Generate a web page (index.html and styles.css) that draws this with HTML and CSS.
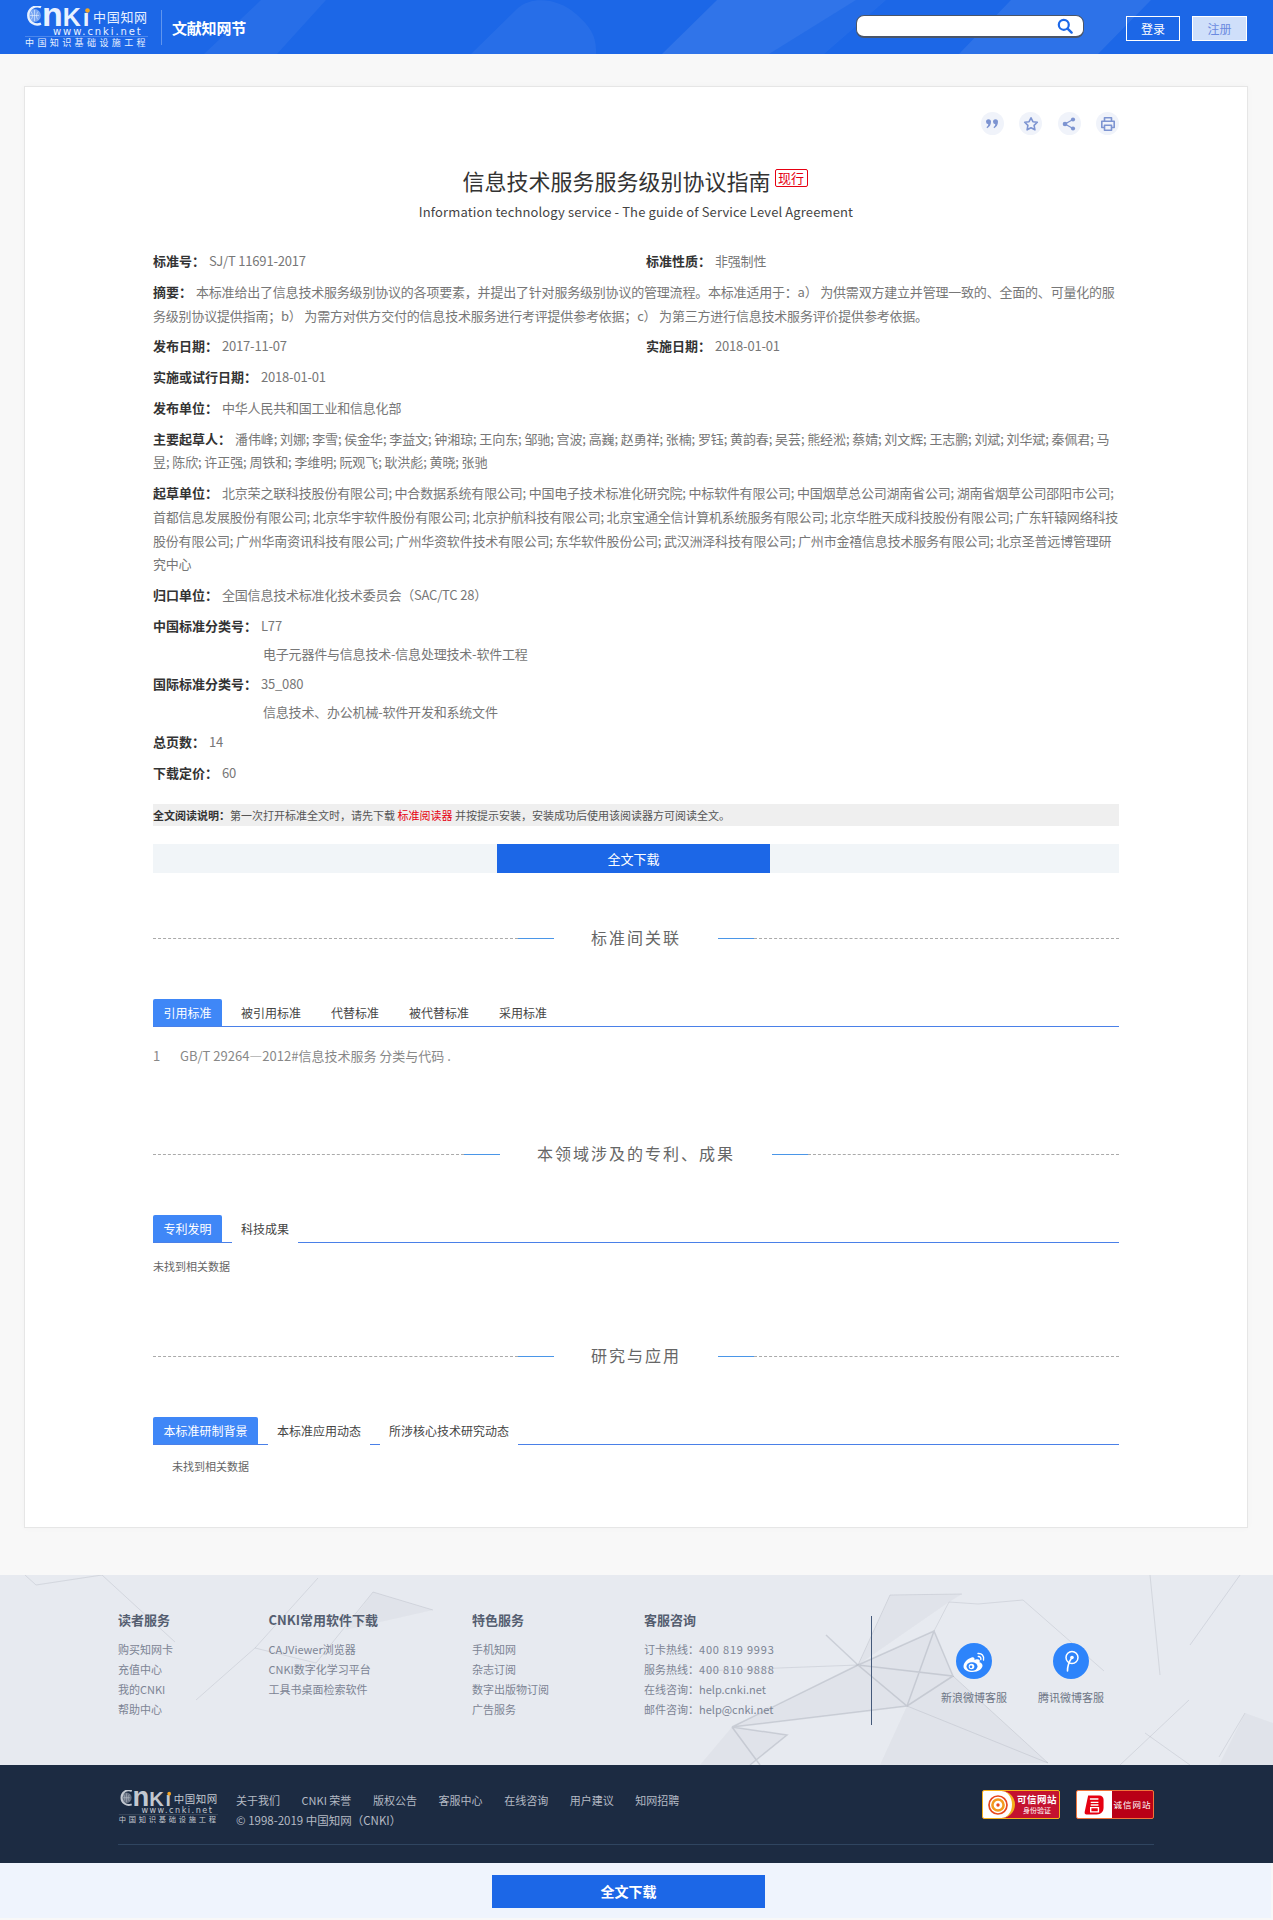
FILE: index.html
```html
<!DOCTYPE html>
<html lang="zh-CN">
<head>
<meta charset="utf-8">
<title>信息技术服务服务级别协议指南</title>
<link rel="stylesheet" href="styles.css">
</head>
<body>
<svg class="defs" width="0" height="0" aria-hidden="true">
  <symbol id="cnki-logo" viewBox="0 0 124 42">
    <path d="M17 1.200A9 9 0 1 0 17 17.600" fill="none" stroke="currentColor" stroke-width="2.400"/>
    <circle cx="10.500" cy="9.500" r="6.400" fill="currentColor" opacity=".45"/>
    <path d="M6 9.500h9M10.500 4v11M7 5.500c2 3 2 6 0 8M14 5.500c-2 3-2 6 0 8" fill="none" stroke="currentColor" stroke-width=".6"/>
    <text class="lg-nki" x="18" y="20">n<tspan class="lg-k">K</tspan><tspan class="lg-i" dx="2">ı</tspan></text>
    <circle cx="63.500" cy="4.500" r="2.300" fill="#f5a623"/>
    <text class="lg-cn" x="69" y="16">中国知网</text>
    <text class="lg-url" x="29" y="28.500">www.cnki.net</text>
    <path d="M1 30.500h123" stroke="currentColor" stroke-width=".4" opacity=".6"/>
    <text class="lg-sub" x="1" y="40">中国知识基础设施工程</text>
  </symbol>
</svg>

<header class="top">
  <svg class="top-bg" viewBox="0 0 1273 54" preserveAspectRatio="none" aria-hidden="true">
    <path d="M204 54 261 0h65l-49 54z" fill="#fff" opacity=".05"/>
    <path d="M471 54 518 8c14-12 40-10 58 6 14 12 20 22 20 36v4z" fill="#fff" opacity=".05"/>
    <path d="M662 54 717 0h139l-87 54z" fill="#fff" opacity=".09"/>
    <path d="M769 54 856 0h30l-62 54z" fill="#fff" opacity=".04"/>
    <path d="M959 54 1011 0h140l-53 54z" fill="#fff" opacity=".08"/>
  </svg>
  <a class="logo"><svg class="logo-svg"><use href="#cnki-logo"/></svg></a>
  <span class="top-sep"></span>
  <span class="top-title">文献知网节</span>
  <div class="search">
    <svg class="search-ic" viewBox="0 0 16 16"><circle cx="6.800" cy="6.800" r="5" fill="none" stroke="#1c68e8" stroke-width="2.200"/><path d="m10.600 10.600 4 4" stroke="#1c68e8" stroke-width="2.400" stroke-linecap="round"/></svg>
  </div>
  <a class="btn-login">登录</a>
  <a class="btn-reg">注册</a>
</header>

<main class="page">
  <article class="card">
    <div class="tools">
      <span class="tool"><svg viewBox="0 0 16 16"><path d="M2 5.800a2.500 2.500 0 1 1 5 0c0 3-1.500 5.200-3.800 6.400l-.7-1c1-.7 1.600-1.500 1.800-2.900A2.500 2.500 0 0 1 2 5.800zM9 5.800a2.500 2.500 0 1 1 5 0c0 3-1.500 5.200-3.800 6.400l-.7-1c1-.7 1.600-1.500 1.800-2.900A2.500 2.500 0 0 1 9 5.800z" fill="#7d94d1"/></svg></span>
      <span class="tool"><svg viewBox="0 0 16 16"><path d="m8 1.800 1.900 3.900 4.400.6-3.200 3.100.8 4.400L8 11.700l-3.900 2.100.8-4.400-3.200-3.100 4.400-.6z" fill="none" stroke="#7d94d1" stroke-width="1.600" stroke-linejoin="round"/></svg></span>
      <span class="tool"><svg viewBox="0 0 16 16"><circle cx="12" cy="3.500" r="2.100" fill="#7d94d1"/><circle cx="12" cy="12.500" r="2.100" fill="#7d94d1"/><circle cx="4" cy="8" r="2.300" fill="#7d94d1"/><path d="m12 3.500-8 4.500 8 4.500" fill="none" stroke="#7d94d1" stroke-width="1.300"/></svg></span>
      <span class="tool"><svg viewBox="0 0 16 16"><path d="M4.500 5V1.800h7V5M4.500 11.500H1.800V5.200h12.400v6.300h-2.700M4.500 9.300h7v5h-7z" fill="none" stroke="#7d94d1" stroke-width="1.600" stroke-linejoin="round"/></svg></span>
    </div>

    <h1 class="doc-title">信息技术服务服务级别协议指南<span class="status">现行</span></h1>
    <p class="doc-sub">Information technology service - The guide of Service Level Agreement</p>

    <div class="info">
      <div class="row row-two">
        <div><b>标准号：</b><span>SJ/T 11691-2017</span></div>
        <div><b>标准性质：</b><span>非强制性</span></div>
      </div>
      <div class="row"><b>摘要：</b><span>本标准给出了信息技术服务级别协议的各项要素，并提出了针对服务级别协议的管理流程。本标准适用于：a） 为供需双方建立并管理一致的、全面的、可量化的服务级别协议提供指南；b） 为需方对供方交付的信息技术服务进行考评提供参考依据；c） 为第三方进行信息技术服务评价提供参考依据。</span></div>
      <div class="row row-two">
        <div><b>发布日期：</b><span>2017-11-07</span></div>
        <div><b>实施日期：</b><span>2018-01-01</span></div>
      </div>
      <div class="row"><b>实施或试行日期：</b><span>2018-01-01</span></div>
      <div class="row"><b>发布单位：</b><span>中华人民共和国工业和信息化部</span></div>
      <div class="row row-names"><b>主要起草人：</b><span>潘伟峰; 刘娜; 李雪; 侯金华; 李益文; 钟湘琼; 王向东; 邹驰; 宫波; 高巍; 赵勇祥; 张楠; 罗钰; 黄韵春; 吴芸; 熊经淞; 蔡婧; 刘文辉; 王志鹏; 刘斌; 刘华斌; 秦佩君; 马昱; 陈欣; 许正强; 周铁和; 李维明; 阮观飞; 耿洪彪; 黄晓; 张驰</span></div>
      <div class="row"><b>起草单位：</b><span>北京荣之联科技股份有限公司; 中合数据系统有限公司; 中国电子技术标准化研究院; 中标软件有限公司; 中国烟草总公司湖南省公司; 湖南省烟草公司邵阳市公司; 首都信息发展股份有限公司; 北京华宇软件股份有限公司; 北京护航科技有限公司; 北京宝通全信计算机系统服务有限公司; 北京华胜天成科技股份有限公司; 广东轩辕网络科技股份有限公司; 广州华南资讯科技有限公司; 广州华资软件技术有限公司; 东华软件股份公司; 武汉洲泽科技有限公司; 广州市金禧信息技术服务有限公司; 北京圣普远博管理研究中心</span></div>
      <div class="row"><b>归口单位：</b><span>全国信息技术标准化技术委员会（SAC/TC 28）</span></div>
      <div class="row row-cat"><b>中国标准分类号：</b><span>L77</span></div>
      <div class="row row-subcat">电子元器件与信息技术-信息处理技术-软件工程</div>
      <div class="row row-cat"><b>国际标准分类号：</b><span>35_080</span></div>
      <div class="row row-subcat">信息技术、办公机械-软件开发和系统文件</div>
      <div class="row"><b>总页数：</b><span>14</span></div>
      <div class="row"><b>下载定价：</b><span>60</span></div>
    </div>

    <p class="notice"><b>全文阅读说明：</b>第一次打开标准全文时，请先下载 <em>标准阅读器</em> 并按提示安装，安装成功后使用该阅读器方可阅读全文。</p>
    <div class="dl-row"><a class="dl-btn">全文下载</a></div>

    <section class="sec sec-1">
      <h2 class="sec-title"><i class="dash"></i><i class="blue"></i><span>标准间关联</span><i class="blue"></i><i class="dash"></i></h2>
      <div class="tabs tabs-plain">
        <a class="tab on">引用标准</a><a class="tab">被引用标准</a><a class="tab">代替标准</a><a class="tab">被代替标准</a><a class="tab">采用标准</a>
      </div>
      <p class="ref"><span class="ref-no">1</span>GB/T 29264—2012#信息技术服务 分类与代码 .</p>
    </section>

    <section class="sec sec-2">
      <h2 class="sec-title"><i class="dash"></i><i class="blue"></i><span>本领域涉及的专利、成果</span><i class="blue"></i><i class="dash"></i></h2>
      <div class="tabs">
        <a class="tab on">专利发明</a><a class="tab">科技成果</a>
      </div>
      <p class="empty">未找到相关数据</p>
    </section>

    <section class="sec sec-3">
      <h2 class="sec-title"><i class="dash"></i><i class="blue"></i><span>研究与应用</span><i class="blue"></i><i class="dash"></i></h2>
      <div class="tabs">
        <a class="tab on">本标准研制背景</a><a class="tab">本标准应用动态</a><a class="tab">所涉核心技术研究动态</a>
      </div>
      <p class="empty empty-in">未找到相关数据</p>
    </section>
  </article>
</main>

<footer>
  <div class="foot-light">
    <svg class="foot-bg" viewBox="0 0 1273 190" aria-hidden="true">
      <g class="net-fill">
        <path d="M373 17 433 35 345 55z"/>
        <path d="M890 20 962 19 949 27 858 90z"/>
        <path d="M858 90 934 56 953 101 907 131z"/>
        <path d="M732 152 858 90 907 131z"/>
        <path d="M907 131 953 101 1048 188 880 190z"/>
        <path d="M1245 138 1273 148V190H1219z"/>
        <path d="M732 152 787 160 750 190H700z"/>
      </g>
      <g class="net-line">
        <path class="thick" d="M858 90 934 56 953 101 858 90 907 131 953 101M934 56 907 131M826 60 858 90M732 152 858 90M732 152 907 131M732 152 787 160 750 190M732 152 760 190"/>
        <path d="M890 20 962 19M890 20 858 90M949 27 978 29 1023 25M949 27 934 56M1023 25 1104 96M953 101 1048 188M907 131 1048 188M700 96 858 90"/>
        <path d="M36 10 102 0M36 10 25 0M102 0 175 67M318 3 255 73 196 125M255 73 316 88 373 17M373 17 433 35"/>
        <path d="M1189 125 1120 190M1145 158 1190 190M1245 138 1219 182M1240 0 1190 70M1150 0 1160 100"/>
      </g>
    </svg>
    <div class="fl-wrap">
      <div class="fcol fcol-1">
        <h3>读者服务</h3>
        <a>购买知网卡</a><a>充值中心</a><a>我的CNKI</a><a>帮助中心</a>
      </div>
      <div class="fcol fcol-2">
        <h3>CNKI常用软件下载</h3>
        <a>CAJViewer浏览器</a><a>CNKI数字化学习平台</a><a>工具书桌面检索软件</a>
      </div>
      <div class="fcol fcol-3">
        <h3>特色服务</h3>
        <a>手机知网</a><a>杂志订阅</a><a>数字出版物订阅</a><a>广告服务</a>
      </div>
      <div class="fcol fcol-4">
        <h3>客服咨询</h3>
        <a>订卡热线：<span class="tel">400 819 9993</span></a><a>服务热线：<span class="tel">400 810 9888</span></a><a>在线咨询：help.cnki.net</a><a>邮件咨询：help@cnki.net</a>
      </div>
      <div class="social">
        <div class="soc">
          <span class="soc-ic"><svg viewBox="0 0 36 36"><path d="M15.500 14.500c-4.500 1.500-8 5.500-8 9 0 3.500 4.500 5.500 9 5.500 6 0 10-3.500 10-6.500 0-2.200-2-3-3-3.300.6-1.500.4-3-2-3-1.200 0-2.500.5-3 .8.300-1.500-.5-3.200-3-2.500z" fill="#fff"/><ellipse cx="16" cy="23.500" rx="5.500" ry="4.200" fill="#2d84fb"/><circle cx="15.500" cy="23.500" r="2.800" fill="#fff"/><circle cx="15" cy="23.800" r="1.300" fill="#2d84fb"/><path d="M22 10.500c3.500-.5 6.500 2.500 5.500 6.500M22.300 13.500c1.600-.2 3 1 2.500 3" fill="none" stroke="#fff" stroke-width="1.400" stroke-linecap="round"/></svg></span>
          <span class="soc-t">新浪微博客服</span>
        </div>
        <div class="soc">
          <span class="soc-ic"><svg viewBox="0 0 36 36"><circle cx="19" cy="14.500" r="6" fill="none" stroke="#fff" stroke-width="1.500"/><circle cx="19" cy="14.500" r="1.800" fill="#fff"/><path d="M18 16c-2 3-3.500 7-3.500 12" fill="none" stroke="#fff" stroke-width="1.600" stroke-linecap="round"/></svg></span>
          <span class="soc-t">腾讯微博客服</span>
        </div>
      </div>
    </div>
  </div>

  <div class="foot-dark">
    <div class="fd-row">
      <svg class="fd-logo"><use href="#cnki-logo"/></svg>
      <div class="fd-links">
        <nav class="fd-nav"><a>关于我们</a><a>CNKI 荣誉</a><a>版权公告</a><a>客服中心</a><a>在线咨询</a><a>用户建议</a><a>知网招聘</a></nav>
        <p class="fd-copy">© 1998-2019 中国知网（CNKI）</p>
      </div>
      <div class="badges">
        <span class="badge badge-a">
          <span class="b-left"><svg viewBox="0 0 28 28"><circle cx="14" cy="14" r="10.500" fill="none" stroke="#e8481e" stroke-width="2"/><circle cx="14" cy="14" r="6.500" fill="none" stroke="#f39a1e" stroke-width="3"/><circle cx="14" cy="14" r="2" fill="#e8481e"/></svg></span>
          <span class="b-right"><b>可信网站</b><small>身份验证</small></span>
        </span>
        <span class="badge badge-b">
          <span class="b-left"><svg viewBox="0 0 28 28"><path d="M6 3h13c3 0 5 2 5 5v9c0 5-3 8-8 8H4c-1.500 0-2.500-1-2-3z" fill="#e60012"/><path d="M8 7h10M9 11h9M9 14h9M9 17h9v5H9z" fill="none" stroke="#fff" stroke-width="1.600"/></svg></span>
          <span class="b-right"><span>诚信网站</span></span>
        </span>
      </div>
    </div>
  </div>

  <div class="foot-bar"><a class="foot-dl">全文下载</a></div>
</footer>
</body>
</html>
```
FILE: styles.css
```css
* { box-sizing: border-box; }
html, body { margin: 0; padding: 0; }
body {
  background: #f8f8f8;
  font-family: "Noto Sans CJK SC", "Liberation Sans", sans-serif;
  font-size: 13px;
  color: #666;
}
a { color: inherit; text-decoration: none; }
h1, h2, h3, p { margin: 0; font-weight: normal; }
.defs { position: absolute; }

/* logo */
.lg-nki { font: bold 34px "Liberation Sans", sans-serif; fill: currentColor; }
.lg-k { font-size: 25px; }
.lg-i { font-size: 24px; }
.lg-cn { font: 13px "Noto Sans CJK SC", sans-serif; fill: currentColor; letter-spacing: .7px; }
.lg-url { font: 10px "DejaVu Sans", sans-serif; fill: currentColor; letter-spacing: 1.900px; }
.lg-sub { font: 9px "Noto Sans CJK SC", sans-serif; fill: currentColor; letter-spacing: 3.400px; }

/* header */
.top {
  position: relative;
  display: flex;
  align-items: center;
  height: 54px;
  padding: 0 26px 0 24px;
  background: #1c67e7;
  color: #fff;
  overflow: hidden;
}
.top-bg { position: absolute; inset: 0; width: 100%; height: 100%; }
.logo, .top-title, .top-sep, .search, .btn-login, .btn-reg { position: relative; }
.logo { display: block; width: 124px; height: 42px; }
.logo-svg { display: block; width: 124px; height: 42px; color: #e8f1ff; }
.top-sep { width: 1px; height: 35px; margin-left: 13px; background: rgba(255,255,255,.3); }
.top-title { margin-left: 10px; font-size: 15px; font-weight: 700; letter-spacing: -.2px; }
.search {
  display: flex;
  align-items: center;
  justify-content: flex-end;
  width: 228px;
  height: 23px;
  margin: -1px 0 0 auto;
  padding-right: 10px;
  background: #fff;
  border: 1px solid #4a5568;
  border-bottom-width: 2px;
  border-radius: 8px;
}
.search-ic { width: 16px; height: 16px; }
.btn-login, .btn-reg {
  display: flex;
  align-items: center;
  justify-content: center;
  height: 25px;
  border: 1px solid #fff;
  font-size: 12px;
  margin-top: 3px;
}
.btn-login { width: 54px; margin-left: 42px; }
.btn-reg { width: 55px; margin-left: 12px; background: #cfdffa; color: #6b8ae0; }

/* main card */
.page { padding: 32px 25px 47px 24px; }
.card {
  padding: 25px 128px 51px;
  background: #fff;
  border: 1px solid #e6e6e6;
  box-shadow: 0 0 6px rgba(0,0,0,.03);
}
.tools { display: flex; justify-content: flex-end; gap: 15.500px; }
.tool {
  display: flex;
  align-items: center;
  justify-content: center;
  width: 23px;
  height: 23px;
  border-radius: 50%;
  background: #f0f3fa;
}
.tool svg { width: 16px; height: 16px; }
.doc-title {
  margin-top: 30px;
  display: flex;
  justify-content: center;
  align-items: center;
  height: 30px;
  font-size: 22px;
  line-height: 30px;
  color: #333;
  padding-right: 2px;
}
.status {
  margin: -5px 0 0 4px;
  width: 33px;
  height: 18px;
  line-height: 16px;
  text-align: center;
  font-size: 13px;
  color: #e60012;
  border: 1px solid #e60012;
  border-radius: 2px;
}
.doc-sub {
  margin-top: 7px;
  height: 20px;
  line-height: 20px;
  text-align: center;
  font-size: 13px;
  letter-spacing: .13px;
  color: #444;
}

/* information rows */
.info { margin-top: 27px; }
.row { line-height: 23.700px; margin-bottom: 7.100px; color: #777; letter-spacing: -.2px; }
.row b { color: #333; font-weight: 700; margin-right: 4px; letter-spacing: 0; }
.row-names { letter-spacing: -.1px; }
.row-two { display: grid; grid-template-columns: 493px 1fr; }
.row-cat { margin-bottom: 4.300px; }
.row-subcat { padding-left: 110px; margin-bottom: 6.300px; }

.notice {
  margin-top: 20px;
  height: 22px;
  line-height: 22px;
  background: #efefef;
  font-size: 11px;
  color: #555;
}
.notice b { color: #333; font-weight: 700; }
.notice em { font-style: normal; color: #e60012; }
.dl-row {
  margin-top: 18px;
  height: 29px;
  padding-left: 344px;
  background: #f1f5f8;
}
.dl-btn {
  display: block;
  width: 273px;
  height: 29px;
  line-height: 29px;
  text-align: center;
  background: #1c67e7;
  color: #fff;
  font-size: 13px;
}

/* sections */
.sec-1 { margin-top: 53px; }
.sec-2 { margin-top: 74px; }
.sec-3 { margin-top: 68px; }
.sec-title {
  display: flex;
  align-items: center;
  height: 24px;
  font-size: 16px;
  line-height: 24px;
  color: #666;
  letter-spacing: 2px;
}
.sec-title span { padding: 0 37px; margin-top: -2px; }
.sec-title i { display: block; height: 0; }
.dash { flex: 1; border-top: 1px dashed #aaa; }
.blue { width: 36px; border-top: 1px solid #4a96e8; }

.tabs {
  display: flex;
  height: 28px;
  margin-top: 49px;
  gap: 10px;
  border-bottom: 1px solid #4a80e8;
}
.tab {
  height: 28px;
  padding: 0 9px;
  line-height: 27px;
  font-size: 12px;
  color: #444;
  background: #fff;
}
.tab.on {
  height: 27px;
  padding: 0 10.500px;
  background: #3f87f7;
  color: #fff;
  border-radius: 2px 2px 0 0;
}
.tabs-plain { gap: 12px; }
.tabs-plain .tab { height: 27px; background: transparent; }
.tabs-plain .tab.on { background: #3f87f7; margin-right: -2px; }
.ref { margin-top: 17px; line-height: 24px; color: #888; }
.ref-no { display: inline-block; width: 27px; }
.empty { margin-top: 13px; line-height: 20px; font-size: 11px; color: #666; }
.empty-in { margin-top: 11px; padding-left: 19px; }

/* light footer */
.foot-light {
  position: relative;
  height: 190px;
  background: #e7eaf0;
  overflow: hidden;
}
.foot-bg { position: absolute; inset: 0; width: 100%; height: 100%; }
.net-fill path { fill: rgba(140,146,160,.07); }
.net-line path { fill: none; stroke: rgba(140,146,160,.22); stroke-width: 1; }
.net-line .thick { stroke: rgba(140,146,160,.3); stroke-width: 1.500; }
.fl-wrap { position: relative; display: flex; padding: 35px 0 0 118px; }
.fcol { display: flex; flex-direction: column; font-size: 11px; color: #7c8494; line-height: 20px; }
.fcol h3 { height: 20px; margin-bottom: 9px; font-size: 13px; font-weight: 700; color: #555e70; }
.fcol-1 { width: 150.500px; }
.fcol-2 { width: 203.500px; }
.fcol-3 { width: 172px; }
.fcol-4 { width: 228px; height: 109px; margin-top: 6px; border-right: 1px solid #44597a; }
.fcol-4 h3 { margin-top: -6px; }
.tel { letter-spacing: .8px; }
.social { display: flex; gap: 31px; margin: 33px 0 0 69px; }
.soc { display: flex; flex-direction: column; align-items: center; width: 66px; }
.soc-ic { width: 36px; height: 36px; border-radius: 50%; background: #2d84fb; }
.soc-ic svg { display: block; width: 36px; height: 36px; }
.soc-t { margin-top: 8px; line-height: 20px; font-size: 11px; color: #6d7585; white-space: nowrap; }

/* dark footer */
.foot-dark { height: 98px; padding: 25px 119px 0 118px; background: #1c2b42; }
.fd-row { display: flex; height: 55px; border-bottom: 1px solid #2f4560; }
.fd-logo { display: block; width: 100px; height: 34px; color: #c3c8d0; }
.fd-links { margin-left: 18px; font-size: 11px; line-height: 20px; color: #b4bac4; }
.fd-nav { display: flex; gap: 21.600px; }
.fd-copy { font-size: 11.500px; }
.badges { display: flex; gap: 16px; margin-left: auto; }
.badge { display: flex; width: 78px; height: 29px; overflow: hidden; border-radius: 2px; }
.badge-a { border: 1px solid #f4b01c; background: #c4122f; }
.badge-b { border: 1px solid #f0743a; background: #b90016; }
.b-left { flex: none; display: flex; align-items: center; justify-content: center; background: #fff; }
.b-left svg { width: 24px; height: 24px; }
.badge-a .b-left { width: 32px; border-right: 3px solid #f4b01c; border-radius: 0 14px 14px 0; }
.badge-b .b-left { width: 35px; }
.b-right { flex: 1; display: flex; flex-direction: column; align-items: center; justify-content: center; color: #fff; font-size: 8.500px; line-height: 11px; white-space: nowrap; letter-spacing: 1px; }
.b-right b { font-size: 9.500px; letter-spacing: .5px; }
.b-right small { font-size: 7px; letter-spacing: 0; }

/* bottom bar */
.foot-bar {
  height: 55px;
  margin: 0 2px 2px 0;
  padding: 12px 0 0 492px;
  background: #eff4fd;
}
.foot-dl {
  display: block;
  width: 273px;
  height: 33px;
  line-height: 33px;
  text-align: center;
  background: #1c67e7;
  color: #fff;
  font-size: 14px;
  font-weight: 700;
}
```
